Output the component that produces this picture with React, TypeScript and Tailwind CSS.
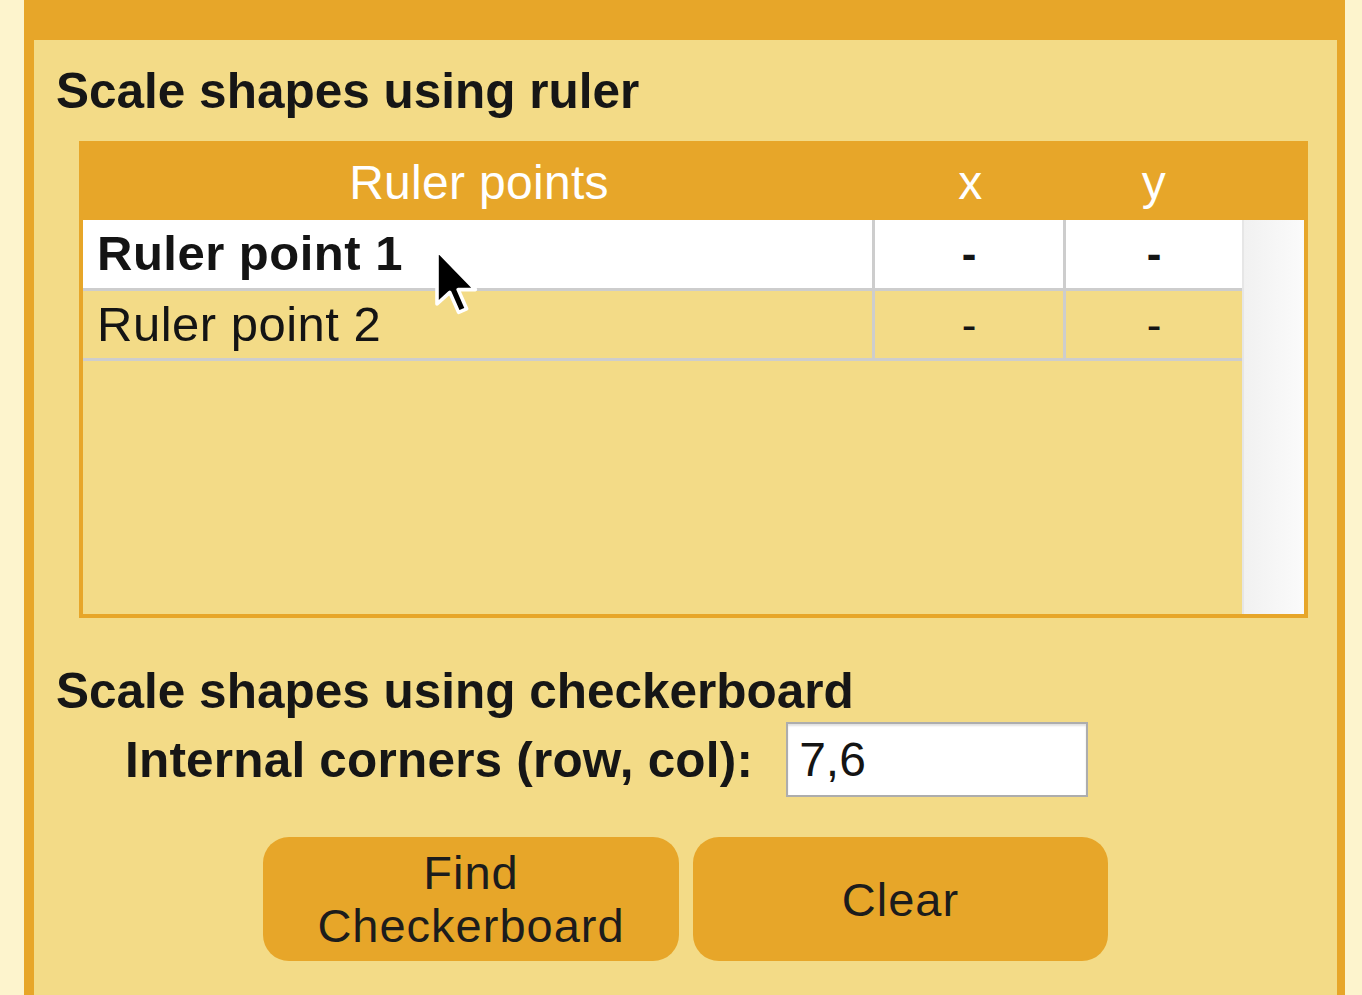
import React from 'react';

const font = { fontFamily: '"Liberation Sans", Arial, sans-serif' };

const Cursor: React.FC = () => (
  <svg
    className="absolute left-[399px] top-[206px] pointer-events-none"
    width="48"
    height="72"
    viewBox="0 0 12 18"
  >
    <path
      d="M1 1 L1 14.5 L4.2 11.6 L6.4 16.6 L8.4 15.7 L6.3 10.9 L10.6 10.9 Z"
      fill="#000"
      stroke="#fff"
      strokeWidth="0.9"
      strokeLinejoin="round"
    />
  </svg>
);

const Row: React.FC<{ label: string; active?: boolean }> = ({ label, active }) => (
  <div
    className={`flex border-b-[3px] border-[#cdcdcd] ${active ? 'bg-white h-[71px]' : 'bg-[#f3db87] h-[70px]'}`}
  >
    <div
      className={`w-[792px] border-r-[3px] border-[#cdcdcd] flex items-center pl-[14px] text-[49px] tracking-[0.5px] text-[#141414] ${active ? 'font-bold' : ''}`}
    >
      {label}
    </div>
    <div
      className={`w-[191px] border-r-[3px] border-[#cdcdcd] flex items-center justify-center text-[44px] text-[#141414] ${active ? 'font-bold' : ''}`}
    >
      -
    </div>
    <div
      className={`w-[176px] flex items-center justify-center text-[44px] text-[#141414] ${active ? 'font-bold' : ''}`}
    >
      -
    </div>
  </div>
);

export default function App() {
  return (
    <div className="flex h-[995px] w-[1362px] overflow-hidden bg-[#fdf4cd]" style={font}>
      <div className="w-[24px] shrink-0" />
      <div className="relative w-[1321px] shrink-0 border-l-[10px] border-r-[8px] border-t-[40px] border-[#e7a629] bg-[#f3db87] pt-[22px] pl-[22px]">
        <h2 className="text-[49.5px] font-bold leading-[57px] text-[#161616]">Scale shapes using ruler</h2>

        {/* Ruler points table */}
        <div className="mt-[22px] ml-[23px] w-[1229px] h-[477px] border-[4px] border-[#e7a629] flex flex-col">
          <div className="flex h-[75px] shrink-0 bg-[#e7a629] text-white text-[48px] tracking-[0.3px]">
            <div className="w-[792px] flex items-center justify-center">Ruler points</div>
            <div className="w-[191px] flex items-center justify-center">x</div>
            <div className="w-[176px] flex items-center justify-center">y</div>
          </div>
          <div className="flex flex-1">
            <div className="w-[1159px] flex flex-col">
              <Row label="Ruler point 1" active />
              <Row label="Ruler point 2" />
            </div>
            <div className="flex-1 border-l-[2px] border-[#e6e6e6] bg-gradient-to-r from-[#f1f1f1] to-[#fbfbfb]" />
          </div>
        </div>

        <h2 className="mt-[44px] text-[49.5px] font-bold leading-[57px] text-[#161616]">
          Scale shapes using checkerboard
        </h2>

        <div className="flex items-center mt-[3px] pl-[69px]">
          <span className="text-[49.5px] font-bold leading-[57px] tracking-[0.2px] text-[#161616]">
            Internal corners (row, col):
          </span>
          <div className="ml-[33px] w-[302px] h-[75px] bg-white border-[2px] border-[#adadad] flex items-center pl-[11px] text-[48px] text-[#141414] shadow-[inset_0_2px_2px_rgba(0,0,0,0.12)]">
            7,6
          </div>
        </div>

        <div className="flex justify-center gap-[14px] mt-[40px] pr-[22px]">
          <button className="w-[416px] h-[124px] rounded-[26px] bg-[#e7a629] text-[47px] leading-[53px] tracking-[1px] text-[#1c1c1c]">
            Find
            <br />
            Checkerboard
          </button>
          <button className="w-[415px] h-[124px] rounded-[26px] bg-[#e7a629] text-[47px] leading-[53px] tracking-[1px] text-[#1c1c1c]">
            Clear
          </button>
        </div>

        <Cursor />
      </div>
    </div>
  );
}
